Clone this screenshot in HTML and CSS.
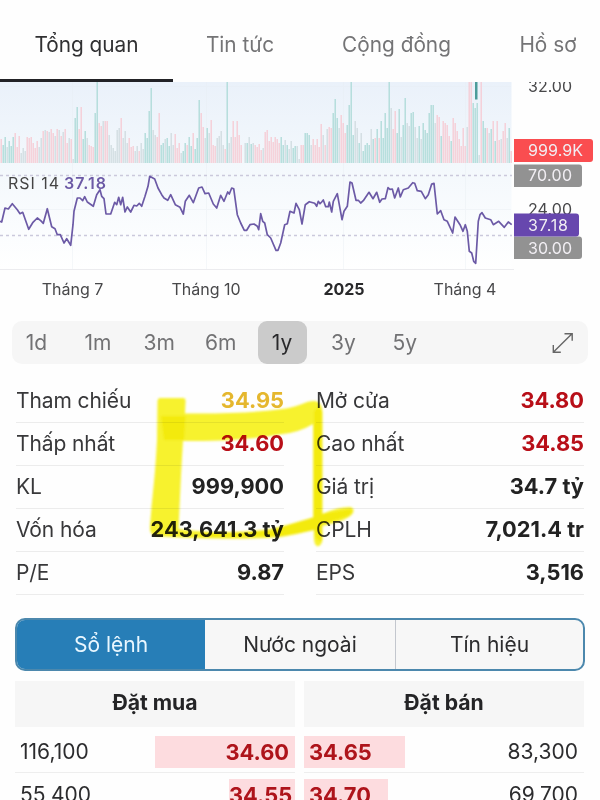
FILE: index.html
```html
<!DOCTYPE html>
<html lang="vi">
<head>
<meta charset="utf-8">
<title>Tổng quan</title>
<link rel="stylesheet" href="styles.css">
</head>
<body>
<nav class="tabs">
  <a class="tab active"><span>Tổng quan</span></a>
  <a class="tab t2"><span>Tin tức</span></a>
  <a class="tab t3"><span>Cộng đồng</span></a>
  <a class="tab t4"><span>Hồ sơ</span></a>
</nav>
<svg class="chart" viewBox="0 82 600 188" width="600" height="188">
  <defs>
    <linearGradient id="sky" x1="0" y1="0" x2="0" y2="1">
      <stop offset="0" stop-color="#eaf1fa"/><stop offset=".43" stop-color="#f3f8fc"/><stop offset="1" stop-color="#ffffff"/>
    </linearGradient>
  </defs>
  <rect x="0" y="82" width="511.500" height="188" fill="url(#sky)"/>
  <path d="M72.500 82V270M206.500 82V270M343.500 82V270M465.500 82V270M0 86.500H511M0 209.500H511" stroke="#e8eef3" stroke-width="1" opacity=".4"/>
  <g id="bars"></g>
  <rect x="475" y="82" width="2.500" height="17.500" fill="#4c9c9a"/>
  <path d="M0 175.500H512M0 235.500H512" stroke="#cbc9dc" stroke-width="1.300" stroke-dasharray="3 3"/>
  <path d="M0 269.500H514" stroke="#ececef" stroke-width="1"/>
  <polyline id="rsi" fill="none" stroke="#6c5aa6" stroke-width="1.700" stroke-linejoin="round"/>
  <text class="legend" x="8" y="189" textLength="51">RSI 14</text>
  <text class="legend value" x="64" y="189" textLength="42">37.18</text>
  <g class="axis">
    <text x="528" y="92" textLength="44">32.00</text>
    <text x="528" y="214.500" textLength="44">24.00</text>
    <path d="M514 139H590a3 3 0 0 1 3 3V159a3 3 0 0 1-3 3H514z" fill="#fa4d50"/>
    <path d="M514 164.500H579a3 3 0 0 1 3 3V184a3 3 0 0 1-3 3H514z" fill="#929292"/>
    <path d="M514 236.500H579a3 3 0 0 1 3 3V256a3 3 0 0 1-3 3H514z" fill="#929292"/>
    <path d="M514 213.500H576a3 3 0 0 1 3 3V233.500a3 3 0 0 1-3 3H514z" fill="#6747ae"/>
    <g class="badge">
      <text x="528" y="156" textLength="55">999.9K</text>
      <text x="528" y="181" textLength="44">70.00</text>
      <text x="528" y="230.500" textLength="40">37.18</text>
      <text x="528" y="253.500" textLength="44">30.00</text>
    </g>
  </g>
</svg>
<div class="months"><span>Tháng 7</span><span>Tháng 10</span><span class="year">2025</span><span>Tháng 4</span></div>
<div class="ranges">
  <span>1d</span><span>1m</span><span>3m</span><span>6m</span><span class="on">1y</span><span>3y</span><span>5y</span>
  <svg class="expand" width="22" height="22" viewBox="0 0 22 22" fill="none" stroke="#666" stroke-width="1.400"><path d="M1.500 20L20 1.800M12.500 1.700H20.200V8.800M1.300 13V20.200H8.800"/></svg>
</div>
<section class="stats">
  <dl>
    <div><dt>Tham chiếu</dt><dd class="gold">34.95</dd></div>
    <div><dt>Thấp nhất</dt><dd class="red">34.60</dd></div>
    <div><dt>KL</dt><dd>999,900</dd></div>
    <div><dt>Vốn hóa</dt><dd>243,641.3 tỷ</dd></div>
    <div><dt>P/E</dt><dd>9.87</dd></div>
  </dl>
  <dl>
    <div><dt>Mở cửa</dt><dd class="red">34.80</dd></div>
    <div><dt>Cao nhất</dt><dd class="red">34.85</dd></div>
    <div><dt>Giá trị</dt><dd>34.7 tỷ</dd></div>
    <div><dt>CPLH</dt><dd>7,021.4 tr</dd></div>
    <div><dt>EPS</dt><dd>3,516</dd></div>
  </dl>
  <svg class="marker" width="240" height="170" viewBox="140 380 240 170">
    <defs><filter id="soft"><feGaussianBlur stdDeviation=".9"/></filter></defs>
    <g filter="url(#soft)">
      <path fill="#f8f32f" d="M160 398H183Q186 398 185.500 402L185 413.500C225 414 262 412 286 408.500C300 406 308 400 315 401Q322 402 322.500 412V514Q337 507 350 507Q355 508 353 513C350 518 340 522 322.500 526V540Q321 547 317 546Q313 545 314 530C302 533 292 535 281 537Q225 541 155 536Q149 534 150 526C152 498 155 480 157 440L157.500 401Q158 398 160 398ZM183 441C181 470 180 500 178.500 529C215 534 245 533 270 529C285 526 300 521 313 518V424Q300 432 283 434C247 440 220 441 183 441Z"/>
      <path fill="#f2e900" d="M161 416H185.500L184 440H164ZM314 412Q318 404 322 412V514L351 509Q353 513 348 516L322 524V541Q316 543 314 530L282 536L200 537V533L270 531L314 517Z" opacity=".8"/>
    </g>
  </svg>
</section>
<div class="segments"><span class="on">Sổ lệnh</span><span>Nước ngoài</span><span>Tín hiệu</span></div>
<section class="book">
  <div class="side buy">
    <h2>Đặt mua</h2>
    <div class="order"><span>116,100</span><b class="w1">34.60</b></div>
    <div class="order"><span>55,400</span><b class="w2">34.55</b></div>
  </div>
  <div class="side sell">
    <h2>Đặt bán</h2>
    <div class="order"><b class="w3">34.65</b><span>83,300</span></div>
    <div class="order"><b class="w4">34.70</b><span>69,700</span></div>
  </div>
</section>
<script src="chart.js"></script>
</body>
</html>
```
FILE: chart.js
```js
// Daily volume: height in px, with t (up) or p (down); plain numbers are neutral.
const volume = `24p 18t 26t 16 22t 17t 26t 30p 16p 27p 10 15 12 26p 25p 26p 20p 15p 22p 16 25 32p 33 32p 31 34p 30p 27 34p 33 27p 31 34p 20p 25 24p
4 45t 56t 34p 56p 24t 32t 25 18p 17p 16p 50t 82t 40p 37p 42 42p 42p 28 18 15 12 33 35 45p 25 32 20 25p 16p 17p 12 17 12p 20 14 30t 25t 52t 75t 33 28 26p 50p
18t 20t 24 25t 17t 30 18 29p 15p 20p 10 12t 20t 18p 26t 17t 30p 14t 25t 63t 50p 36p 25 35t 30 43p 18p 17p 25 27 32 18 14p 82t 20 26 42p 26p 42p 28p 18p 0
20 20t 26 19t 20 18p 16p 19p 13p 15 31p 33p 22p 26p 21p 26p 24p 20p 26t 18t 23 18t 14 22 15t 17t 17 4 18p 18p 30t 30t 28t 18 24p 18p 24p 16p 39p 28 18p 34 36p 35p
50t 64t 45t 35 48p 40p 30p 38t 58t 82t 28t 42 35 20t 30 12t 18t 20t 18t 34 24t 25p 34t 25p 42t 25t 50t 35t 82t 55 34p 52p 30t 54t 26 38t 65t 40 37 50t 51t 36 25 37t
24 40t 33t 30t 50t 58t 58t 40 48p 46p 27t 42p 40p 38p 27p 22t 45p 40p 32p 24p 17p 35p 17p 36 82p 82p 60t 55t 60t 8 82p 42t 35t 35p 30 34t 42p 22t 42p 23p 24 32p 40p 25 35t 12p`.split(/\s+/);
const colors = { t: "#b1dcda", p: "#f6ced6", n: "#d2dde2" };
const NS = "http://www.w3.org/2000/svg";
const bars = document.getElementById("bars");
volume.forEach((v, i) => {
  const h = parseInt(v, 10);
  const r = document.createElementNS(NS, "rect");
  r.setAttribute("x", i * 2 + 0.5);
  r.setAttribute("y", 163 - h);
  r.setAttribute("width", 1.4);
  r.setAttribute("height", h);
  r.setAttribute("fill", colors[v.slice(-1)] || colors.n);
  bars.appendChild(r);
});

// RSI samples in thirds of a pixel, each run with its starting offset.
const runs = [
  [0, "0,430 5,432 15,390 25,393 37,377 52,395 60,407 68,403 86,454 98,434 112,420 122,428 130,436 142,392 155,446 165,452 172,470 181,470 192,495 200,482 212,502 219,440 222,400 232,360 240,360 248,368 254,356 262,372 280,385 290,350 300,335 305,355 312,362 318,408 332,408 344,373 350,380 356,358 362,380 368,358 375,402 382,387 392,402 402,382 410,384 418,376 425,385 435,355 444,325 449,295 464,303 474,330 485,350 492,360 503,367 512,350 526,380 540,388"],
  [540, "10,408 16,370 28,352 40,374 56,330 66,327 75,347 86,345 100,378 110,390 122,352 132,370 143,342 148,348 155,330 161,332 172,410 182,435 193,457 200,457 210,440 222,438 232,445 236,455 242,407 248,430 254,435 262,470 272,480 288,517 294,517 302,495 314,440 322,437 330,400 342,405 348,376 358,395 366,438 376,380 388,371 404,376 410,385 415,370 420,377 425,372 430,366 437,386 445,386 448,372 455,402 460,370 472,347 478,380 486,425 492,400 502,385 510,312 516,315 528,367 535,367 542,375"],
  [1080, "10,368 27,343 39,362 50,343 59,373 66,363 76,362 84,329 90,334 97,333 104,360 115,330 121,357 130,335 145,330 158,314 164,316 172,338 184,340 196,362 205,350 215,318 222,316 232,408 242,398 252,425 262,430 278,465 285,417 300,440 309,460 316,440 322,460 328,520 335,525 341,550 347,556 355,430 360,410 366,404 376,420 392,425 400,440 416,430 433,448 445,432 455,440"]
];
document.getElementById("rsi").setAttribute("points", runs.map(([dx, s]) =>
  s.split(" ").map(p => {
    const [x, y] = p.split(",").map(Number);
    return ((x + dx) / 3).toFixed(1) + "," + (y / 3 + 78).toFixed(1);
  }).join(" ")).join(" "));
```
FILE: styles.css
```css
* { box-sizing: border-box; }
body { margin: 0; width: 600px; height: 800px; overflow: hidden; background: #fefefe; color: #2c2c2e; font-family: Inter, "Noto Sans", sans-serif; font-size: 21px; }
.tabs { display: flex; height: 82px; }
.tab { display: flex; flex: none; align-items: center; justify-content: center; padding-top: 10px; border-bottom: 3px solid transparent; color: #747476; font-size: 20.800px; white-space: nowrap; }
.tab.active { width: 173px; color: #303032; border-color: #222226; }
.t2 { width: 134px; }
.t3 { width: 179px; }
.t4 { width: 124px; }
.chart { display: block; }
.legend { font-size: 16px; fill: #444; }
.legend.value { font-weight: 600; fill: #6c5aa6; }
.axis { font-size: 16px; fill: #48484a; }
.badge { fill: #f1eef3; }
.months { display: grid; grid-template-columns: 145px 122px 154px 88px; height: 51px; padding-top: 7px; line-height: 24px; font-size: 16px; text-align: center; color: #48484a; }
.year { font-weight: 700; color: #29292b; }
.ranges { display: flex; align-items: center; height: 43px; margin: 0 12px; padding-right: 14px; background: #f6f6f6; border-radius: 10px; color: #727274; }
.ranges span { width: 49px; height: 43px; margin-right: 12.400px; line-height: 43px; text-align: center; }
.ranges .on { background: #cbcbcb; color: #29292b; border-radius: 9px; }
.expand { margin-left: auto; }
.stats { position: relative; display: grid; grid-template-columns: 268px 268px; column-gap: 32px; margin: 16px 16px 0; }
.stats dl { margin: 0; }
.stats dl div { display: flex; justify-content: space-between; height: 43px; line-height: 42px; border-bottom: 1px solid #ececec; white-space: nowrap; }
.stats dt { color: #38383a; letter-spacing: -.1px; }
.stats dd { margin: 0; font-weight: 650; font-size: 21.800px; line-height: 41px; color: #222; }
.stats .gold { color: #e5b72e; }
.stats .red { color: #b80f18; }
.marker { position: absolute; left: 124px; top: 0; mix-blend-mode: multiply; }
.segments { display: grid; grid-template-columns: 188px 190px 188px; height: 53px; margin: 23px 15px 0; border: 2px solid #4c88ad; border-radius: 10px; background: #f7f7f7; overflow: hidden; line-height: 49px; text-align: center; }
.segments span + span + span { border-left: 1px solid #c3c7ce; }
.segments .on { background: #277eb7; color: #e9f7ff; }
.book { display: grid; grid-template-columns: 280px 280px; gap: 9px; margin: 10px 15px 0; }
.book h2 { height: 46px; margin: 0 0 3px; background: #f6f6f6; font-size: 21.200px; font-weight: 700; line-height: 43px; text-align: center; color: #242426; }
.order { display: flex; align-items: center; justify-content: space-between; height: 43px; padding-top: 1px; border-bottom: 1px solid #eee; }
.buy .order { padding-left: 5px; }
.sell .order { padding-right: 6px; }
.order b { height: 32px; line-height: 32px; background: #fddcdf; color: #ae141b; font-weight: 650; font-size: 21.800px; }
.buy b { padding-right: 6px; text-align: right; }
.sell b { padding-left: 5px; }
.w1 { width: 140px; }
.w2 { width: 66px; }
.w3 { width: 101px; }
.w4 { width: 84px; }
```
